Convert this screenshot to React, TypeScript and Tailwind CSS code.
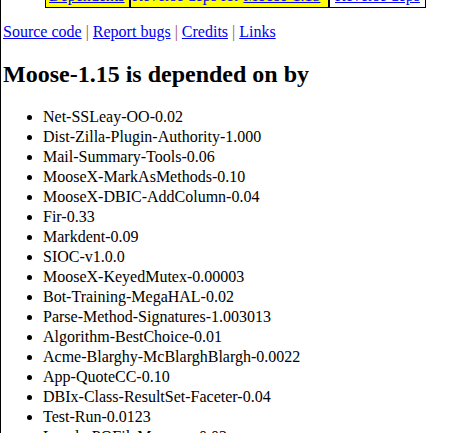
import React from 'react';

const dependents = [
    'Net-SSLeay-OO-0.02',
    'Dist-Zilla-Plugin-Authority-1.000',
    'Mail-Summary-Tools-0.06',
    'MooseX-MarkAsMethods-0.10',
    'MooseX-DBIC-AddColumn-0.04',
    'Fir-0.33',
    'Markdent-0.09',
    'SIOC-v1.0.0',
    'MooseX-KeyedMutex-0.00003',
    'Bot-Training-MegaHAL-0.02',
    'Parse-Method-Signatures-1.003013',
    'Algorithm-BestChoice-0.01',
    'Acme-Blarghy-McBlarghBlargh-0.0022',
    'App-QuoteCC-0.10',
    'DBIx-Class-ResultSet-Faceter-0.04',
    'Test-Run-0.0123',
    'Locale-POFileManager-0.02',
];

const navLinks = ['Source code', 'Report bugs', 'Credits', 'Links'];

export default function App() {
    return (
        <div className="min-h-screen bg-white border-l border-black pl-[2px] font-['Liberation_Serif',serif] text-[16px] text-black overflow-hidden">

            {/* options table, scrolled mostly out of view */}
            <div className="flex h-[8px] ml-[42px] w-[381px] border-l border-b border-black overflow-hidden">
                <div className="w-[85px] h-[7px] bg-[#ffff00] border-r-2 border-black overflow-hidden pl-[3px]">
                    <div className="mt-[-13px] leading-[18px] whitespace-nowrap">
                        <a className="text-[#0000ee] underline">Dependents</a>
                    </div>
                </div>
                <div className="w-[199px] h-[7px] bg-[#ffff00] border-r-2 border-black overflow-hidden pl-[1px]">
                    <div className="mt-[-13px] leading-[18px] whitespace-nowrap text-[#0000ee]">
                        Reverse deps for <a className="underline">Moose-1.15</a>
                    </div>
                </div>
                <div className="flex-1 h-[7px] bg-white border-r border-black overflow-hidden pl-[5px]">
                    <div className="mt-[-13px] leading-[18px] whitespace-nowrap">
                        <a className="text-[#0000ee] underline">Reverse deps</a>
                    </div>
                </div>
            </div>

            <p className="mt-[15px] leading-[18px]">
                {navLinks.map((l, i) => (
                    <React.Fragment key={l}>
                        {i > 0 && <span className="text-[#a05050]"> | </span>}
                        <a className="text-[#0000ee] underline">{l}</a>
                    </React.Fragment>
                ))}
            </p>

            <h2 className="mt-[19px] text-[24px] leading-[28px] font-bold">Moose-1.15 is depended on by</h2>

            <ul className="mt-[19px] pl-[40px] list-disc">
                {dependents.map(d => (
                    <li key={d} className="leading-[20px]">{d}</li>
                ))}
            </ul>
        </div>
    );
}
